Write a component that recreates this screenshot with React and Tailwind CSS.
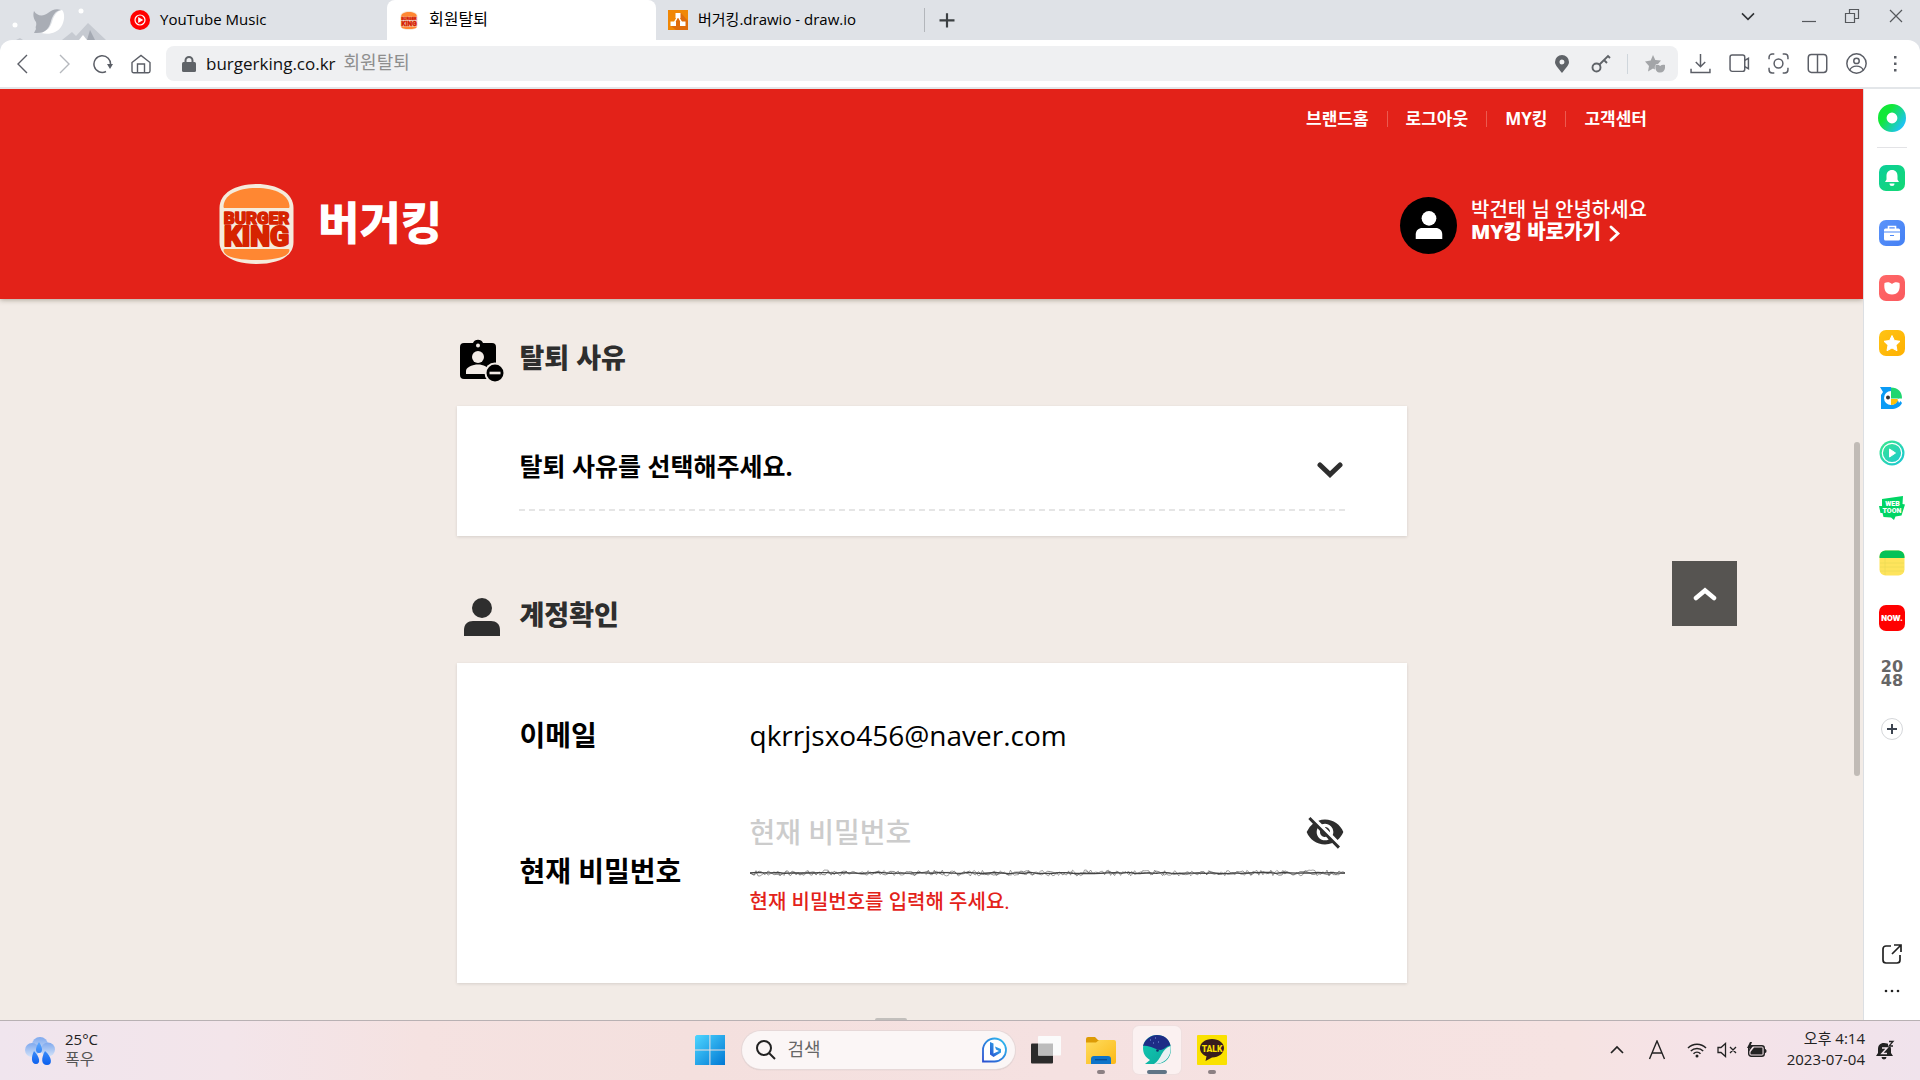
import React, { useState } from "react";
import {
  MdVisibilityOff,
} from "react-icons/md";

/* ---------- shared drawings ---------- */

function BurgerLogo({ className }) {
  return (
    <svg viewBox="0 0 74 80" className={className} aria-hidden="true">
      <path d="M0 24C0 9 16 0 37 0s37 9 37 24v34c0 15-16 22-37 22S0 73 0 58Z" fill="#f5ebdc" />
      <path d="M4 23C4 11 18 4 37 4s33 7 33 19c0 1-1 1-2 1H6c-1 0-2 0-2-1Z" fill="#ff8732" />
      <path d="M4 66c0-1 1-1 2-1h62c1 0 2 0 2 1 0 7-15 10-33 10S4 73 4 66Z" fill="#ff8732" />
      <g fill="#d62300" stroke="#d62300" strokeLinejoin="round" textAnchor="middle" fontFamily="Roboto, sans-serif" fontWeight="900">
        <text x="37" y="39.500" fontSize="17" strokeWidth="1.400">BURGER</text>
        <text x="37" y="62" fontSize="28" strokeWidth="2">KING</text>
      </g>
    </svg>
  );
}

function Icon({ children, className = "size-6", sw = 1.5, box = 24 }) {
  return (
    <svg viewBox={`0 0 ${box} ${box}`} className={className} fill="none" stroke="currentColor" strokeWidth={sw} aria-hidden="true">
      {children}
    </svg>
  );
}

function Person({ className }) {
  return (
    <svg viewBox="0 0 36 38" className={className} fill="currentColor" aria-hidden="true">
      <circle cx="18" cy="10" r="10" />
      <path d="M0 38v-6c0-6 4-9 9-9h18c5 0 9 3 9 9v6Z" />
    </svg>
  );
}

/* ---------- browser chrome ---------- */

function TabBar() {
  return (
    <header className="flex h-10 shrink-0 items-stretch bg-[#dfe2e7] text-black">
      <svg viewBox="0 0 110 40" className="h-10 w-[110px]" aria-hidden="true">
        <circle cx="15" cy="25" r="2.500" fill="#fff" />
        <circle cx="81" cy="11" r="2.500" fill="#fff" />
        <path d="M62 40 72 32l4 4 12-13 18 17Z" fill="#c6cad1" />
        <path d="m79 40 4-5 4 5Z" fill="#fff" />
        <path d="m87 40 3-10 5 10Z" fill="#a4a9b2" />
        <path d="m16 40 4-2 3 2Z" fill="#c6cad1" />
        <path d="M62 10c3 3 3 11-1 17-4 6-12 8-20 6 7-3 9-5 11-11 2-7 5-11 10-12Z" fill="#fff" />
        <path d="M34 11c3 5 9 6 14 2 4-3 8-5 13-3-6 1-8 5-10 11-2 7-5 13-17 12l2-4c-1-3 1-3 0-7-3-4-3-8-2-11Z" fill="#a9adb5" />
      </svg>
      <div className="flex w-[277px] items-center gap-2.5 pl-5">
        <svg viewBox="0 0 20 20" className="size-5 shrink-0" aria-hidden="true">
          <circle cx="10" cy="10" r="10" fill="#f00" />
          <circle cx="10" cy="10" r="5" fill="none" stroke="#fff" strokeWidth="1.2" />
          <path d="m8.200 7 5 3-5 3Z" fill="#fff" />
        </svg>
        <span className="pb-0.5 text-[15px]">YouTube Music</span>
      </div>
      <div className="flex w-[269px] items-center gap-[11px] rounded-t-lg bg-white pl-[13px]">
        <BurgerLogo className="h-[19px] w-[18px] shrink-0" />
        <span className="pb-0.5 text-[16px]">회원탈퇴</span>
      </div>
      <div className="flex w-[268px] items-center gap-2.5 pl-3">
        <svg viewBox="0 0 20 20" className="size-5 shrink-0" aria-hidden="true">
          <path d="M0 0h20v20H0Z" fill="#f08705" />
          <path d="m13 3 7 8v9H8l-5-4 6-7Z" fill="#df6c0c" />
          <path d="m10 6-5 9m5-9 5 9" stroke="#fff" strokeWidth="1.500" />
          <path d="M7.500 3h5v5h-5ZM2.500 11.500h5.500v4.500H2.500ZM12 11.500h5.500v4.500H12Z" fill="#fff" />
        </svg>
        <span className="pb-0.5 text-[15px]">버거킹.drawio - draw.io</span>
      </div>
      <button type="button" aria-label="새 탭" className="my-2 flex items-center border-l border-[#b3b6bb] pl-3 text-[#3c4043]">
        <Icon className="size-5" sw={2.6}><path d="M12 4v17M3 12.500h18" /></Icon>
      </button>
      <div className="ml-auto flex h-8 items-center pr-4 text-[#55585c]">
        <button type="button" aria-label="탭 목록" className="mr-[45px] text-[#303336]"><Icon className="h-4 w-4" sw={2.4}><path d="m3 8 9 9 9-9" /></Icon></button>
        <button type="button" aria-label="최소화" className="mr-[27px]"><Icon className="size-4" box={16} sw={1.2}><path d="M1 13.500h14" /></Icon></button>
        <button type="button" aria-label="이전 크기로" className="mr-7"><Icon className="size-4" box={16} sw={1.2}><path d="M1.500 5.500h9v9h-9ZM5.500 5.500v-4h9v9h-4" /></Icon></button>
        <button type="button" aria-label="닫기"><Icon className="size-4" box={16} sw={1.2}><path d="m2 2 12 12M14 2 2 14" /></Icon></button>
      </div>
    </header>
  );
}

function Toolbar() {
  const btn = "flex items-center justify-center";
  return (
    <div className="bg-[#dfe2e7]">
      <div className="flex h-[47px] items-center rounded-t-xl bg-white pr-[15px] pl-3 text-[#5b5e66]">
        <button type="button" aria-label="뒤로" className={btn}><Icon className="size-5" box={20} sw={1.4}><path d="m15 1-9 9 9 9" /></Icon></button>
        <button type="button" aria-label="앞으로" className={`${btn} ml-6 text-[#b5b8bd]`}><Icon className="size-5" box={20} sw={1.4}><path d="m4 1 9 9-9 9" /></Icon></button>
        <button type="button" aria-label="새로고침" className={`${btn} ml-[17px]`}>
          <Icon className="size-5" box={20} sw={1.5}><path d="M13 17.500a8.300 8.300 0 1 1 4.500-6.500" /><path d="M14 10h6l-3 5Z" fill="currentColor" stroke="none" /></Icon>
        </button>
        <button type="button" aria-label="홈" className={`${btn} ml-[18px]`}>
          <Icon className="size-5" box={20} sw={1.4}><path d="M1 8.500 10 1.500l9 7V17c0 1-.6 1.700-1.700 1.700H2.700C1.600 18.700 1 18 1 17ZM6.500 18.500V10h7v8.500" /></Icon>
        </button>
        <div className="ml-[15px] flex h-[35px] flex-1 items-center rounded-lg bg-[#eff0f2] pr-[13px] pl-4">
          <svg viewBox="0 0 14 16" className="h-4 w-3.5" aria-hidden="true"><rect y="6" width="14" height="10" rx="1.500" fill="#5f6368" /><path d="M3.500 7V4.500a3.500 3.500 0 0 1 7 0V7" fill="none" stroke="#5f6368" strokeWidth="2" /></svg>
          <a href="#" className="ml-2.5 text-[17px] text-[#111]">burgerking.co.kr</a>
          <span className="ml-2 pb-0.5 text-[18px] text-[#8e8e8e]">회원탈퇴</span>
          <div className="ml-auto flex items-center">
            <button type="button" aria-label="위치"><svg viewBox="0 0 14 18" className="h-[18px] w-3.5" aria-hidden="true"><path fillRule="evenodd" d="M7 18C3 13 0 10 0 7a7 7 0 0 1 14 0c0 3-3 6-7 11ZM7 4.500a2.500 2.500 0 1 0 0 5 2.500 2.500 0 0 0 0-5Z" fill="#5f6368" /></svg></button>
            <button type="button" aria-label="비밀번호 관리" className="ml-[22px] text-[#5f6368]"><Icon className="size-5" box={20} sw={1.900}><circle cx="5.500" cy="13.500" r="4" /><path d="m8.500 10.500 8.500-8.500 2 2M13 6l3 3" /></Icon></button>
            <span className="mx-[16px] h-5 w-px bg-[#cfd6dc]" />
            <button type="button" aria-label="즐겨찾기" className="ml-px"><svg viewBox="0 0 20 20" className="size-5" aria-hidden="true"><path d="m8 1 2.300 5 5.700.6-3 3.400c-3-.5-3.500 2-3 5.500L8 14.500 3 17.500 4 12 0 7.500 5.700 6.600Z" fill="#a3a5a8" /><path d="M10.500 11c1.800-.6 3.300-.3 4.700 1 1.300-1.300 3-1.600 4.800-1 .5 4.500-1 7.500-4.800 7.500S10 15.500 10.500 11Z" fill="#a3a5a8" /></svg></button>
          </div>
        </div>
        <div className="ml-3 flex items-center gap-[18px]">
          <button type="button" aria-label="다운로드"><Icon className="size-[21px]" box={20} sw={1.4}><path d="M10 1v12M5.500 8.500 10 13l4.500-4.500M1 15v3.500h18V15" /></Icon></button>
          <button type="button" aria-label="녹화"><Icon className="size-[21px]" box={20} sw={1.4}><rect x="1" y="2" width="14" height="15.500" rx="2" /><path d="m15 7 3.500-2v10L15 13" /></Icon></button>
          <button type="button" aria-label="캡처"><Icon className="size-[21px]" box={20} sw={1.4}><circle cx="10" cy="10" r="4.200" /><path d="M1 6V4a3 3 0 0 1 3-3h2M14 1h2a3 3 0 0 1 3 3v2M19 14v2a3 3 0 0 1-3 3h-2M6 19H4a3 3 0 0 1-3-3v-2" /></Icon></button>
          <button type="button" aria-label="화면 분할"><Icon className="size-[21px]" box={20} sw={1.4}><rect x="1.200" y="1.500" width="17.600" height="17" rx="3" /><path d="M10 1.500v17" /></Icon></button>
          <button type="button" aria-label="프로필"><Icon className="size-[21px]" box={20} sw={1.4}><circle cx="10" cy="10" r="9.200" /><circle cx="10" cy="7.500" r="2.600" /><path d="M3.500 16.500c1-2.700 3.500-4 6.500-4s5.500 1.300 6.500 4" /></Icon></button>
          <button type="button" aria-label="메뉴"><svg viewBox="0 0 20 20" className="size-5" fill="currentColor" aria-hidden="true"><rect x="9" y="2" width="2.500" height="2.500" /><rect x="9" y="8.500" width="2.500" height="2.500" /><rect x="9" y="15" width="2.500" height="2.500" /></svg></button>
        </div>
      </div>
      <div className="h-0.5 bg-[#e3e6e9]" />
    </div>
  );
}

/* ---------- site ---------- */

const navItems = ["브랜드홈", "로그아웃", "MY킹", "고객센터"];

function SiteHeader() {
  return (
    <div className="relative h-[210px] shrink-0 bg-[#e32219] pl-[3px] text-white shadow-[0_1px_5px_rgba(90,80,60,0.45)]">
      <div className="mx-auto w-full max-w-[1428px]">
        <nav className="flex justify-end pt-4">
          {navItems.map((label, i) => (
            <a key={label} href="#" className="flex items-center text-[17px] leading-7 font-bold">
              {i > 0 && <span className="mx-[18px] h-4 w-px bg-[#ec5a50]" />}
              {label}
            </a>
          ))}
        </nav>
        <div className="mt-[51px] flex items-center justify-between">
          <a href="#" className="flex items-center gap-6">
            <BurgerLogo className="h-20 w-[75px]" />
            <h1 className="pb-1 text-[45px] leading-none font-black">버거킹</h1>
          </a>
          <a href="#" className="flex items-center gap-3.5 pt-0.5">
            <span className="flex size-[57px] items-center justify-center rounded-full bg-black">
              <Person className="h-7 w-7" />
            </span>
            <span className="block pb-2 text-[20px] leading-[22px]">
              <span className="block font-medium">박건태 님 안녕하세요</span>
              <span className="flex items-center gap-2 font-black">
                MY킹 바로가기
                <svg viewBox="0 0 11 17" className="mt-0.5 h-[17px] w-[11px]" fill="none" stroke="currentColor" strokeWidth="2.800" strokeLinecap="round" aria-hidden="true"><path d="m2 2 7 6.500L2 15" /></svg>
              </span>
            </span>
          </a>
        </div>
      </div>
    </div>
  );
}

/* Pencil-like rule: one dense stroke and loose, uneven fibres round it. */
function SketchLine() {
  let seed = 11;
  const rnd = () => {
    seed = (seed * 16807) % 2147483647;
    return seed / 2147483647;
  };
  const stroke = (spread, step) => {
    let d = "M0 4";
    for (let x = step; x < 594; x += step) d += `L${x} ${(4 + (rnd() - 0.5) * spread).toFixed(1)}`;
    return `${d}L594 4`;
  };
  return (
    <svg viewBox="0 0 594 8" preserveAspectRatio="none" className="block h-2 w-full" fill="none" stroke="#444" aria-hidden="true">
      <path d={stroke(1.2, 7)} strokeWidth="1.300" />
      <path d={stroke(6, 2)} strokeWidth="0.500" />
      <path d={stroke(4.5, 3)} strokeWidth="0.600" />
    </svg>
  );
}

function SectionTitle({ icon, children }) {
  return (
    <h2 className="flex h-12 items-center text-[27px] font-black text-[#2e2e2e]">
      <span className="flex w-[63px] items-center pt-1">{icon}</span>
      {children}
    </h2>
  );
}

function ReasonSection() {
  return (
    <section>
      <SectionTitle
        icon={
          <svg viewBox="0 0 44 43" className="ml-[3px] h-[43px] w-11" aria-hidden="true">
            <path d="M4 4h9a5.500 5.500 0 0 1 10 0h9a4 4 0 0 1 4 4v28a4 4 0 0 1-4 4H4a4 4 0 0 1-4-4V8a4 4 0 0 1 4-4Z" fill="#000" />
            <circle cx="18" cy="6.500" r="2" fill="#f2ebe6" />
            <circle cx="18" cy="18" r="6" fill="#f2ebe6" />
            <path d="M6 35v-3c0-4 7-6.500 12-6.500S29 28 29 32v3Z" fill="#f2ebe6" />
            <circle cx="35" cy="34" r="10.500" fill="#f2ebe6" />
            <circle cx="35" cy="34" r="8.500" fill="#000" />
            <path d="M29.500 32.700h11v2.600h-11Z" fill="#f2ebe6" />
          </svg>
        }
      >
        탈퇴 사유
      </SectionTitle>
      <div className="mt-6 bg-white px-[62px] pt-8 pb-[25px] shadow-[0_1px_3px_rgba(0,0,0,0.12)]">
        <div className="relative">
          <select aria-label="탈퇴 사유" className="block h-[60px] w-full appearance-none bg-transparent pb-0.5 pl-px text-[25px] font-bold text-black outline-none">
            <option>탈퇴 사유를 선택해주세요.</option>
          </select>
          <svg viewBox="0 0 26 16" className="pointer-events-none absolute top-6 right-0.5 h-4 w-[26px]" fill="none" stroke="#2e2e2e" strokeWidth="5" strokeLinecap="round" aria-hidden="true"><path d="m3 3 10 9.500L23 3" /></svg>
        </div>
        <div className="mt-[11px] h-0.5 bg-[repeating-linear-gradient(90deg,#e5e5e5_0_6px,transparent_6px_10px)]" />
      </div>
    </section>
  );
}

function AccountSection() {
  const [shown, setShown] = useState(false);
  return (
    <section className="mt-[55px]">
      <SectionTitle icon={<Person className="ml-[7px] h-[38px] w-9" />}>계정확인</SectionTitle>
      <div className="mt-6 grid h-[320px] grid-cols-[231px_1fr] content-start bg-white px-[62px] pt-[49px] text-[28px] text-black shadow-[0_1px_3px_rgba(0,0,0,0.12)]">
        <span className="pl-px leading-[46px] font-bold">이메일</span>
        <span className="leading-[46px] font-medium">qkrrjsxo456@naver.com</span>
        <label htmlFor="password" className="self-center pt-[66px] pl-px font-bold">현재 비밀번호</label>
        <div className="pt-[46px]">
          <div className="flex h-[56px] items-center">
            <input id="password" type={shown ? "text" : "password"} placeholder="현재 비밀번호" className="min-w-0 flex-1 bg-transparent font-medium outline-none placeholder:text-[#cccccc]" />
            <button type="button" aria-label="비밀번호 표시" onClick={() => setShown(!shown)} className="text-[#2e2e2e]">
              <MdVisibilityOff className="size-10" />
            </button>
          </div>
          <div className="mt-[9px]"><SketchLine /></div>
          <p className="mt-[9px] text-[20px] leading-8 font-medium text-[#e32219]">현재 비밀번호를 입력해 주세요.</p>
        </div>
      </div>
    </section>
  );
}

/* ---------- sidebar ---------- */

function Tile({ a, b, children }) {
  const id = `tile-${a.slice(1)}`;
  return (
    <svg viewBox="0 0 26 26" className="size-[26px]" aria-hidden="true">
      <defs><linearGradient id={id} x1="0" y1="0" x2="1" y2="1"><stop stopColor={a} /><stop offset="1" stopColor={b} /></linearGradient></defs>
      <rect width="26" height="26" rx="7" fill={`url(#${id})`} />
      {children}
    </svg>
  );
}

const apps = [
  ["알림", <Tile a="#0ccf9a" b="#13d873"><path d="M13 5c-3.500 0-5.500 2.500-5.500 6v3.500L6 17h14l-1.500-2.500V11c0-3.500-2-6-5.500-6ZM10.500 18.500h5a2.500 2.500 0 0 1-5 0Z" fill="#fff" /></Tile>],
  ["도구", <Tile a="#5b93fa" b="#4480f4"><path d="M9.500 9V6.500h7V9" fill="none" stroke="#fff" strokeWidth="1.600" /><rect x="5" y="8.500" width="16" height="12" rx="1.500" fill="#fff" /><path d="M5 12h16M11 15.500h4" stroke="#4d88f7" strokeWidth="1.200" /></Tile>],
  ["포켓", <Tile a="#ff6868" b="#fa5a5e"><path d="M5.500 8c2.800-1.200 5.500-.8 7.500 1 2-1.800 4.700-2.200 7.500-1 1 7-1.500 11.500-7.500 11.500S4.500 15 5.500 8Z" fill="#fff" /></Tile>],
  ["즐겨찾기", <Tile a="#ffc415" b="#ffb000"><path d="m13 5.500 2.400 5 5.600.8-4 3.900 1 5.500-5-2.700-5 2.700 1-5.500-4-3.900 5.600-.8Z" fill="#fff" stroke="#fff" strokeLinejoin="round" /></Tile>],
  ["파파고", (
    <svg viewBox="0 0 26 26" className="size-[26px]" aria-hidden="true">
      <path d="M1 2h11v11h7l4 5c-2 4-6 6-11 6H2V10L4 7Z" fill="#0a9bf5" />
      <circle cx="12" cy="13" r="7" fill="#fff" />
      <path d="M12 2.500c7 0 11 4 11 11H12Z" fill="#1fd66f" />
      <path d="M12 14h7c0 3-3 6-7 6Z" fill="#ffc107" />
      <path d="M18.500 14H23l-3 4Z" fill="#fff" />
      <circle cx="9" cy="12.500" r="2" fill="#333" />
    </svg>
  )],
  ["동영상", (
    <svg viewBox="0 0 26 26" className="size-[26px]" aria-hidden="true">
      <defs><linearGradient id="vid" x1="0" y1="0" x2="1" y2="1"><stop stopColor="#3be98a" /><stop offset="1" stopColor="#18c5d8" /></linearGradient></defs>
      <circle cx="13" cy="13" r="12.500" fill="url(#vid)" />
      <circle cx="13" cy="13" r="9.700" fill="none" stroke="#fff" strokeWidth="1.200" />
      <path d="m10.500 9 6 4-6 4Z" fill="#fff" stroke="#fff" strokeLinejoin="round" />
    </svg>
  )],
  ["웹툰", (
    <svg viewBox="0 0 26 26" className="size-[26px]" aria-hidden="true">
      <path d="m3 4 21-3-.5 8 2.500.5-3.500 11-6 1L15 25l-3-2.500L4.500 22 3.500 18H1.500L0 11h3Z" fill="#00d564" />
      <g fill="#fff" fontFamily="Roboto, sans-serif" fontWeight="900" textAnchor="middle" fontSize="7"><text x="13.500" y="11">WEB</text><text x="13" y="17.500">TOON</text></g>
    </svg>
  )],
  ["메모", (
    <svg viewBox="0 0 26 26" className="size-[26px]" aria-hidden="true">
      <rect x=".5" y=".5" width="25" height="25" rx="6" fill="#fee45c" />
      <path d="M.5 8V6.500a6 6 0 0 1 6-6h13a6 6 0 0 1 6 6V8Z" fill="#04c257" />
      <path d="M1 13h24M1 17h24M1 21h24M6 8v17" stroke="#eedb55" strokeWidth=".8" />
    </svg>
  )],
  ["나우", <Tile a="#ff0000" b="#ff0000"><text x="13" y="15.800" fill="#fff" fontFamily="Inter, sans-serif" fontWeight="900" fontSize="7.500" textAnchor="middle">NOW.</text></Tile>],
  ["2048", (
    <svg viewBox="0 0 26 26" className="size-[26px] overflow-visible" aria-hidden="true">
      <g fill="#666" fontFamily="DejaVu Sans, sans-serif" fontWeight="700" fontSize="16" textAnchor="middle"><text x="13" y="12">20</text><text x="13" y="25.500">48</text></g>
    </svg>
  )],
];

function Sidebar() {
  return (
    <aside className="flex w-[57px] shrink-0 flex-col items-center border-l border-[#dcdfe3] bg-white pt-[15px]">
      <button type="button" aria-label="웨일">
        <svg viewBox="0 0 28 28" className="block size-7" aria-hidden="true">
          <defs><linearGradient id="ring" x1="0" y1="0.200" x2="1" y2="0.900"><stop offset="0.200" stopColor="#12e838" /><stop offset="1" stopColor="#1ec4ee" /></linearGradient></defs>
          <circle cx="14" cy="14" r="9.700" fill="none" stroke="url(#ring)" strokeWidth="8.600" />
        </svg>
      </button>
      <span className="mt-[15px] h-px w-[30px] bg-[#e3e3e6]" />
      <div className="mt-[17px] flex flex-col gap-[29px]">
        {apps.map(([label, art]) => (
          <button key={label} type="button" aria-label={label} className="block">{art}</button>
        ))}
      </div>
      <button type="button" aria-label="추가" className="mt-8 flex size-[22px] items-center justify-center rounded-full border border-[#d5d7da] text-[#3c4450]">
        <Icon className="size-3" box={12} sw={2}><path d="M6 1v10M1 6h10" /></Icon>
      </button>
      <button type="button" aria-label="새 창으로 열기" className="mt-auto text-[#222]">
        <Icon className="size-[22px]" box={22} sw={1.700}><path d="M10 3H5a3 3 0 0 0-3 3v11a3 3 0 0 0 3 3h11a3 3 0 0 0 3-3v-5M13 2h7v7M20 2l-9 9" /></Icon>
      </button>
      <button type="button" aria-label="더보기" className="mt-4 mb-[19px] text-[#222]">
        <svg viewBox="0 0 20 20" className="size-5" fill="currentColor" aria-hidden="true"><circle cx="4" cy="10" r="1.300" /><circle cx="10" cy="10" r="1.300" /><circle cx="16" cy="10" r="1.300" /></svg>
      </button>
    </aside>
  );
}

/* ---------- taskbar ---------- */

function Taskbar() {
  return (
    <footer className="grid h-[60px] shrink-0 grid-cols-[1fr_auto_1fr] items-center border-t border-[#b8b1b3] bg-[linear-gradient(90deg,#f0e5ee_0%,#f3e5ea_12%,#f5e2e1_22%,#f4e0de_36%,#f5e1e1_55%,#f6e3e2_82%,#f5e3e8_89%,#f0e3ec_100%)] text-[#222]">
      <button type="button" className="flex items-center gap-2.5 justify-self-start pl-[25px] text-left text-[15px] leading-5">
        <svg viewBox="0 0 30 28" className="h-7 w-[30px]" aria-hidden="true">
          <defs>
            <linearGradient id="cloud" x1="0" y1="0" x2="0" y2="1"><stop stopColor="#7fa9ee" /><stop offset="1" stopColor="#d3e2f8" /></linearGradient>
            <linearGradient id="drop" x1="0" y1="0" x2="0" y2="1"><stop stopColor="#59a7ff" /><stop offset="1" stopColor="#0b5fee" /></linearGradient>
          </defs>
          <circle cx="15" cy="8" r="8" fill="url(#cloud)" /><circle cx="7" cy="13" r="7" fill="url(#cloud)" /><circle cx="23" cy="12.500" r="7" fill="url(#cloud)" />
          <path d="M14 5c-4 6-4 11 0 11s4-5 0-11ZM9 14c-3 6-3 13 2 13s4-7-2-13ZM20 14c-4 7-4 14 2 14s5-8-2-14Z" fill="url(#drop)" />
        </svg>
        <span className="pb-1">
          <span className="block">25°C</span>
          <span className="block text-[16px] text-[#555]">폭우</span>
        </span>
      </button>

      <div className="ml-[17px] flex items-center pb-0.5">
        <button type="button" aria-label="시작">
          <svg viewBox="0 0 30 30" className="size-[30px]" aria-hidden="true">
            <defs><linearGradient id="win" gradientUnits="userSpaceOnUse" x1="0" y1="0" x2="30" y2="30"><stop stopColor="#4fd6ff" /><stop offset="1" stopColor="#0078d4" /></linearGradient></defs>
            <path d="M1.500 0H14.400v14.400H0V1.500ZM15.400 0H30v14.400H15.400ZM0 15.400h14.400V30H0ZM15.400 15.400H30V30H15.400Z" fill="url(#win)" />
          </svg>
        </button>
        <label className="ml-[17px] flex h-[38px] w-[273px] items-center rounded-full bg-[#fbf6f6] pr-2 pl-3.5 shadow-[0_0_0_1px_#e6d8d8,0_1px_1px_#b9abab]">
          <Icon className="size-5" box={20} sw={2}><circle cx="8" cy="8" r="7" /><path d="m13 13 6 6" /></Icon>
          <input aria-label="검색" placeholder="검색" className="ml-3 min-w-0 flex-1 bg-transparent text-[18px] outline-none placeholder:text-[#666]" />
          <svg viewBox="0 0 26 26" className="size-[26px]" aria-hidden="true">
            <defs><linearGradient id="bing" x1="0" y1="1" x2="1" y2="0"><stop stopColor="#2b4fd0" /><stop offset="1" stopColor="#2fc0f0" /></linearGradient></defs>
            <path d="M2 24.500V13A11.500 11.500 0 1 1 13.500 24.500Z" fill="#fff" stroke="url(#bing)" strokeWidth="1.800" />
            <path d="m9 5 3.500 1.500v10L18 14l-3-1.500-1-3 6 2.500v3.500L12.500 20 9 17.500Z" fill="url(#bing)" />
          </svg>
        </label>
        <button type="button" aria-label="작업 보기" className="ml-4">
          <svg viewBox="0 0 30 28" className="h-7 w-[30px]" aria-hidden="true"><rect y="7.500" width="22" height="20" rx="1" fill="#2b2b2b" /><rect x="7" width="23" height="19.500" rx="1" fill="#fbfbfb" /><path d="M7 7.500h15v12H7Z" fill="#bcbcbc" /></svg>
        </button>
        <button type="button" aria-label="파일 탐색기" className="ml-2 flex h-12 w-16 flex-col items-center justify-end">
          <svg viewBox="0 0 30 28" className="h-7 w-[30px]" aria-hidden="true">
            <defs><linearGradient id="fold" x1="0" y1="0" x2="1" y2="1"><stop stopColor="#ffdc5e" /><stop offset="1" stopColor="#fbb917" /></linearGradient></defs>
            <path d="M0 2a2 2 0 0 1 2-2h7l3 3h16v8H0Z" fill="#dd9b05" /><path d="M0 5.500h10L13 3h15a2 2 0 0 1 2 2v20a2 2 0 0 1-2 2H0Z" fill="url(#fold)" />
            <path d="M5 27v-5a3 3 0 0 1 3-3h14a3 3 0 0 1 3 3v5Z" fill="#0f74c9" /><path d="M9 22.700h12" stroke="#0a4f94" strokeWidth="1.300" />
          </svg>
          <span className="mt-[5px] h-1 w-2 rounded-full bg-[#8c8083]" />
        </button>
        <button type="button" aria-label="웨일 브라우저" className="flex size-12 flex-col items-center justify-end rounded-md bg-[#fbf1f1] shadow-[0_0_0_1px_#efe0e0]">
          <svg viewBox="0 0 28 30" className="mb-[5px] h-[30px] w-7" aria-hidden="true">
            <defs><linearGradient id="whl" x1="0" y1="0" x2="1" y2="1"><stop stopColor="#14c9b4" /><stop offset="1" stopColor="#0aa99a" /></linearGradient></defs>
            <path d="M0 13C0 6 6 0 14 0s14 6 14 14c0 9-6 15-15 15H2l5-4c-5-3-7-7-7-12Z" fill="url(#whl)" />
            <path d="M27.500 11C29 21 22 29 11 29c8-5 7-15 16.500-18Z" fill="#e8f0f2" />
            <path d="M0 11C2 4 8 0 14 0c7 0 12 4 13.500 10.500-5 .5-6 4.500-10 4.500C12 15 7 10 0 11Z" fill="#1e2c86" />
            <circle cx="14.500" cy="15.500" r="1.300" fill="#12306b" />
            <path d="M7 5h1M12 3h1M10 8h1M15 7h1" stroke="#7f9ae0" />
          </svg>
          <span className="h-1 w-5 rounded-full bg-[#5f7486]" />
        </button>
        <button type="button" aria-label="카카오톡" className="flex h-12 w-[62px] flex-col items-center justify-end">
          <svg viewBox="0 0 30 30" className="size-[30px]" aria-hidden="true">
            <rect width="30" height="30" rx="1" fill="#fae100" />
            <path d="M15 4c7 0 12 4 12 9s-5 9.500-12 9.500L8.500 26l1-4.700C5.500 19.700 3 17 3 13c0-5 5-9 12-9Z" fill="#371d1e" />
            <text x="15" y="16.500" fill="#fae100" fontFamily="Roboto, sans-serif" fontWeight="900" fontSize="8.500" textAnchor="middle">TALK</text>
          </svg>
          <span className="mt-[5px] h-1 w-2 rounded-full bg-[#8c8083]" />
        </button>
      </div>

      <div className="flex items-center justify-self-end pr-[25px] pb-0.5">
        <button type="button" aria-label="숨겨진 아이콘"><Icon className="size-4" box={16} sw={1.700}><path d="m2 11 6-6 6 6" /></Icon></button>
        <button type="button" aria-label="입력기" className="ml-[22px]"><Icon className="size-5" box={20} sw={1.400}><path d="m2.500 19 7.500-18 7.500 18M5.500 13h9" /></Icon></button>
        <button type="button" aria-label="네트워크와 소리" className="ml-5 flex items-center gap-2.5">
          <svg viewBox="0 0 20 16" className="h-4 w-5" fill="none" stroke="currentColor" strokeWidth="1.500" aria-hidden="true"><path d="M1 6a12.500 12.500 0 0 1 18 0M3.800 9a8.800 8.800 0 0 1 12.400 0M6.500 11.700a5 5 0 0 1 7 0" /><circle cx="10" cy="14" r="1.500" fill="currentColor" stroke="none" /></svg>
          <svg viewBox="0 0 20 16" className="h-4 w-5" fill="none" stroke="currentColor" strokeWidth="1.300" aria-hidden="true"><path d="M1 5.500h3L8.500 1.500v13L4 10.500H1ZM13 5l6 6M19 5l-6 6" /></svg>
          <svg viewBox="0 0 20 16" className="h-4 w-5" aria-hidden="true"><rect x="1.700" y="3.700" width="15.600" height="10.600" rx="2.500" fill="none" stroke="currentColor" strokeWidth="1.400" /><path d="M7 5.500h8.500v7h-12V10Z" fill="currentColor" /><path d="M18 7c2 0 2 4 0 4Z" fill="currentColor" /><path d="M3 0 0 6h2.500l-1 4L6 4H3.500L5 0Z" fill="currentColor" /></svg>
        </button>
        <button type="button" className="ml-5 pb-0.5 text-right text-[15px] leading-[21px]">
          <span className="block">오후 4:14</span>
          <span className="block">2023-07-04</span>
        </button>
        <button type="button" aria-label="알림 센터" className="ml-2.5">
          <svg viewBox="0 0 20 20" className="size-5" aria-hidden="true"><path d="M9 3c-4 0-6 2.500-6 6v4l-2 3h17l-2-3V9c0-3-2-6-7-6ZM6.500 17h5a2.500 2.500 0 0 1-5 0Z" fill="currentColor" /><path d="M7 8h5l-5 5.500h5" fill="none" stroke="#f1e4ec" strokeWidth="1.500" /><path d="M13 0h6v7h-6Z" fill="#f1e4ec" /><path d="M14 1.500h4L14 6h4" fill="none" stroke="currentColor" strokeWidth="1.300" /></svg>
        </button>
      </div>
    </footer>
  );
}

export default function App() {
  return (
    <div className="flex h-screen flex-col overflow-hidden font-['Open_Sans','Noto_Sans_CJK_KR',sans-serif]">
      <TabBar />
      <Toolbar />
      <div className="flex min-h-0 flex-1">
        <main className="relative flex min-w-0 flex-1 flex-col overflow-hidden bg-[#f2ebe6]">
          <SiteHeader />
          <form className="mx-auto mt-[35px] w-full max-w-[950px]" onSubmit={(e) => e.preventDefault()}>
            <ReasonSection />
            <AccountSection />
          </form>
          <button type="button" aria-label="맨 위로" className="absolute top-[472px] right-[126px] flex size-[65px] items-center justify-center bg-[#565451] text-white">
            <svg viewBox="0 0 24 14" className="h-3.5 w-6" fill="none" stroke="currentColor" strokeWidth="4.500" strokeLinecap="round" aria-hidden="true"><path d="m3 11 9-7.500L21 11" /></svg>
          </button>
          <span className="absolute top-[353px] right-[3px] h-[334px] w-1.5 rounded-full bg-[#c1bbb6]" />
          <span className="absolute bottom-0 left-[875px] h-0.5 w-8 rounded-t-full bg-[#c2bfbc]" />
        </main>
        <Sidebar />
      </div>
      <Taskbar />
    </div>
  );
}
